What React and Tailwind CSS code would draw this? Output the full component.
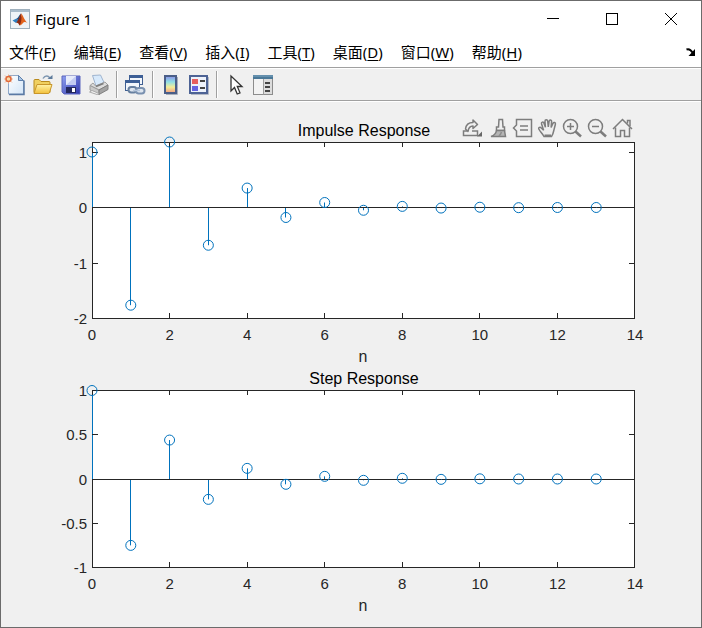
import React from "react";

const MENUS = [
    { label: "文件", hotkey: "F" },
    { label: "编辑", hotkey: "E" },
    { label: "查看", hotkey: "V" },
    { label: "插入", hotkey: "I" },
    { label: "工具", hotkey: "T" },
    { label: "桌面", hotkey: "D" },
    { label: "窗口", hotkey: "W" },
    { label: "帮助", hotkey: "H" },
];

const IMPULSE = [1, -1.76, 1.18, -0.68, 0.35, -0.18, 0.09, -0.05, 0.02, -0.01, 0.005, -0.003, 0, 0];
const STEP = [1, -0.75, 0.44, -0.23, 0.12, -0.06, 0.03, -0.015, 0.008, -0.004, 0.002, 0, 0, 0];

const AXIS = "#262626";
const LINE = "#0072bd";

// Outer edges of the plot box, in viewBox units
const LEFT = 91;
const RIGHT = 634;
const X_MAX = 14;

const MatlabLogo = () => (
    <svg width="20" height="20" viewBox="0 0 20 20" aria-hidden="true">
        <rect x="0.5" y="0.5" width="19" height="19" fill="#eef3f7" stroke="#9fb0bd" />
        <rect x="1" y="1" width="18" height="2" fill="#a9bccb" />
        <path d="M2.5 11.5 6.5 9.5 8.5 11.8 6 14Z" fill="#2f7fc1" />
        <path d="M6.5 9.5C8.5 9 9.2 5.5 11 4.5L8.5 11.8Z" fill="#1c4f86" />
        <path d="M11 4.5C9.6 6.5 9.4 9.8 6 14c2-.6 2.600 1 3.600 2.500C11.500 15 12.200 12.800 13 12.300Z" fill="#8c2a12" />
        <path d="M11 4.500c1.600.3 3 6.500 6.500 9.500-2.200-1.400-3.600-1.200-4.700.2-1 1.200-2 2.300-3.200 2.300C11.300 14 12 9 11 4.500Z" fill="#e2631d" />
    </svg>
);

const NewIcon = () => (
    <svg width="22" height="22" viewBox="0 0 22 22" aria-hidden="true">
        <defs>
            <linearGradient id="paper" x1="0" y1="0" x2="1" y2="1">
                <stop offset="0" stopColor="#ffffff" />
                <stop offset="1" stopColor="#d3e5f7" />
            </linearGradient>
        </defs>
        <path d="M4.500 1.500h10l5 5v13.500h-15Z" fill="url(#paper)" stroke="#8fa8c8" />
        <path d="M20 6.500V20.500H5" fill="none" stroke="#5a79a4" strokeWidth="1.500" />
        <path d="M14.500 1.500v5h5Z" fill="#a9c6e6" stroke="#5d7fab" />
        <path d="M1 1.500 8 8.500M8 1.500 1 8.500M4.500.5v9M0 5h9" stroke="#f3b391" />
        <circle cx="4.500" cy="5" r="2.500" fill="#fbd9a5" stroke="#e06a3a" strokeWidth="1.500" />
    </svg>
);

const OpenIcon = () => (
    <svg width="22" height="22" viewBox="0 0 22 22" aria-hidden="true">
        <defs>
            <linearGradient id="folder" x1="0" y1="0" x2="0" y2="1">
                <stop offset="0" stopColor="#fff3a8" />
                <stop offset="1" stopColor="#f2c03a" />
            </linearGradient>
        </defs>
        <path d="M2 18.500V6.500q0-1 1-1h4l2 2h8q1 0 1 1v10Z" fill="#f0d060" stroke="#b98a1d" />
        <path d="M2 19.500 5 10.500h15L17.500 18.500q-.3 1-1.300 1Z" fill="url(#folder)" stroke="#c9962a" />
        <path d="M11 4.500C13 1 16.500 1 18 4.500" fill="none" stroke="#7f97b1" strokeWidth="1.500" />
        <path d="M15.500 5h5V1Z" fill="#5d7b9c" />
    </svg>
);

const SaveIcon = () => (
    <svg width="22" height="22" viewBox="0 0 22 22" aria-hidden="true">
        <defs>
            <linearGradient id="floppy" x1="0" y1="0" x2="1" y2="1">
                <stop offset="0" stopColor="#8fa0f0" />
                <stop offset="1" stopColor="#2f37ad" />
            </linearGradient>
        </defs>
        <path d="M2 2h18v18H4L2 18Z" fill="url(#floppy)" stroke="#5a64bd" />
        <rect x="6" y="2" width="10" height="9" fill="#e6ebfb" />
        <path d="M16 2 6 11h10Z" fill="#c2cbf2" />
        <rect x="6" y="13" width="10" height="6" fill="#23285e" />
        <rect x="12" y="14" width="3" height="4" fill="#ffffff" />
    </svg>
);

const PrintIcon = () => (
    <svg width="22" height="22" viewBox="0 0 22 22" aria-hidden="true">
        <path d="M4.500 1.500 12.500 1 16 8.500 8 12Z" fill="#d7e9fb" stroke="#9fb4cf" />
        <path d="M2 11.500 5 9l2.500 3L17 8l3 3-9 5Z" fill="#dcdcdc" stroke="#a0a0a0" />
        <path d="M2 11.500 11 16v4.500L2 16Z" fill="#c9c9c9" stroke="#9b9b9b" />
        <path d="M11 16 20 11v4.500l-9 5Z" fill="#a3a3a3" stroke="#808080" />
        <path d="M4 16.500 1.500 18 9 20.500l2-1Z" fill="#f4f4f4" stroke="#aaaaaa" />
        <path d="M8 12.500 15.500 9.500" stroke="#7d7d7d" strokeWidth="1.500" />
    </svg>
);

const LinkIcon = () => (
    <svg width="22" height="22" viewBox="0 0 22 22" aria-hidden="true">
        <rect x="5.500" y="1.500" width="13" height="9" fill="#f2f6fb" stroke="#3f5f92" />
        <rect x="5" y="1" width="14" height="3" fill="#3d5f96" />
        <rect x="1.500" y="6.500" width="14" height="10" fill="#f2f6fb" stroke="#3f5f92" />
        <rect x="1" y="6" width="15" height="3" fill="#3d5f96" />
        <rect x="4.500" y="13" width="8" height="5.500" rx="2.700" fill="#dde5ef" stroke="#667f9f" strokeWidth="2" />
        <rect x="12" y="14" width="8.500" height="5.500" rx="2.700" fill="#dde5ef" stroke="#7a91b0" strokeWidth="2" />
        <path d="M9 16.500h7" stroke="#b4c5db" strokeWidth="1.500" />
    </svg>
);

const ColorbarIcon = () => (
    <svg width="22" height="22" viewBox="0 0 22 22" aria-hidden="true">
        <defs>
            <linearGradient id="colorbar" x1="0" y1="0" x2="0" y2="1">
                <stop offset="0" stopColor="#8c8ee8" />
                <stop offset="0.35" stopColor="#8fe0e6" />
                <stop offset="0.65" stopColor="#f3ee98" />
                <stop offset="1" stopColor="#f09a80" />
            </linearGradient>
        </defs>
        <rect x="5" y="2" width="11" height="17" fill="url(#colorbar)" stroke="#4a5e88" strokeWidth="2" />
        <path d="M17.500 3v17.500H6" fill="none" stroke="#a9afbb" />
    </svg>
);

const LegendIcon = () => (
    <svg width="22" height="22" viewBox="0 0 22 22" aria-hidden="true">
        <rect x="2" y="2" width="17" height="17" fill="#edf2fb" stroke="#4d6395" strokeWidth="2" />
        <path d="M20.500 3v17.500H3" fill="none" stroke="#b3b9c6" />
        <rect x="4" y="5" width="6" height="5" fill="#e65f5f" />
        <rect x="4" y="12" width="6" height="5" fill="#6464e2" />
        <path d="M12 7h5M12 14h5" stroke="#444444" strokeWidth="2" />
    </svg>
);

const PointerIcon = () => (
    <svg width="22" height="22" viewBox="0 0 22 22" aria-hidden="true">
        <path d="M7 2v15l3.500-3.500 2.700 6.500 2.800-1.200-2.700-6.300H18Z" fill="#ffffff" stroke="#333333" strokeWidth="1.300" />
    </svg>
);

const PropertyIcon = () => (
    <svg width="22" height="22" viewBox="0 0 22 22" aria-hidden="true">
        <rect x="1.500" y="1.500" width="19" height="19" fill="#f3f3f3" stroke="#8d8d8d" />
        <rect x="1" y="1" width="20" height="4" fill="#4a7898" />
        <path d="M1 2h20" stroke="#7ea7c2" />
        <rect x="12" y="5" width="8" height="15" fill="#dcdcdc" />
        <path d="M11.500 5v15.500" stroke="#9d9d9d" />
        <path d="M13 9h5M13 13h5M13 17h5" stroke="#444444" strokeWidth="2" />
    </svg>
);

const AxesIcon = ({ children }) => (
    <svg width="25" height="24" viewBox="0 0 25 24" fill="none" stroke="#7d7d7d" strokeWidth="1.500" aria-hidden="true">
        {children}
    </svg>
);

const AXES_TOOLS = [
    {
        name: "Export",
        icon: (
            <AxesIcon>
                <path d="M7 14H3.500v4.500h14V14H12" />
                <path d="M5.500 12C6 7.500 8.500 5.500 13 5.500V3l4.500 4.500L13 11.500V9c-3 0-4.500 1.500-5 5.500Z" strokeLinejoin="round" />
                <path d="M22 14.500v5h-5Z" fill="#666666" stroke="none" />
            </AxesIcon>
        ),
    },
    {
        name: "Brush",
        icon: (
            <AxesIcon>
                <path d="M13.500 10 14 2.500h3.500L18 10h1.500v3.500h-8V10Z" />
                <path d="M11.500 13.500C11 16.500 9 18.500 6 19.500h14.500l-1-6Z" fill="#b5b5b5" />
                <path d="M14 19c1-1 2-2.500 2.500-4" stroke="#8d8d8d" />
            </AxesIcon>
        ),
    },
    {
        name: "Data tips",
        icon: (
            <AxesIcon>
                <path d="M6.500 2.500h15v17h-15v-5.500L3.500 11l3-3Z" />
                <path d="M10 9h8M10 13h8" />
            </AxesIcon>
        ),
    },
    {
        name: "Pan",
        icon: (
            <AxesIcon>
                <path
                    d="M9 19.500C7.500 16.500 5 14.500 3.800 12c-.6-1.600 1.400-2.200 2.500-1l2.300 2.200L6.500 6.800c-.4-1.900 1.900-2.400 2.500-.6l1.400 4L10 4.200c0-2 2.500-2 2.700 0l.6 5.800.8-5.800c.3-1.900 2.700-1.600 2.500.3l-.5 6 1.800-4c.8-1.700 3-1 2.500.8l-1.600 6.200c-.5 2.500-1 4.300-2.300 6Z"
                    fill="#eeeeee"
                />
                <path d="M9.500 18.500h6.500" strokeWidth="2" />
            </AxesIcon>
        ),
    },
    {
        name: "Zoom in",
        icon: (
            <AxesIcon>
                <circle cx="10.500" cy="9.500" r="7" />
                <path d="M10.500 6v7M7 9.500h7" />
                <path d="m15.500 14.500 5.500 5" strokeWidth="2.500" />
            </AxesIcon>
        ),
    },
    {
        name: "Zoom out",
        icon: (
            <AxesIcon>
                <circle cx="10.500" cy="9.500" r="7" />
                <path d="M7 9.500h7" />
                <path d="m15.500 14.500 5.500 5" strokeWidth="2.500" />
            </AxesIcon>
        ),
    },
    {
        name: "Restore view",
        icon: (
            <AxesIcon>
                <path d="M3 12 12.500 2.500 22 12" />
                <path d="M17.500 6.500V3.500H20V9" />
                <path d="M5.500 10.500v9h5v-6h4v6h5v-9" />
            </AxesIcon>
        ),
    },
];

const TOOL_GROUPS = [
    [
        { name: "新建图窗", Icon: NewIcon },
        { name: "打开文件", Icon: OpenIcon },
        { name: "保存图窗", Icon: SaveIcon },
        { name: "打印图窗", Icon: PrintIcon },
    ],
    [{ name: "链接/取消链接绘图", Icon: LinkIcon }],
    [
        { name: "插入颜色栏", Icon: ColorbarIcon },
        { name: "插入图例", Icon: LegendIcon },
    ],
    [
        { name: "编辑绘图", Icon: PointerIcon },
        { name: "打开属性检查器", Icon: PropertyIcon },
    ],
];

// Stem plot; top and bottom are the rows of the box edges, zero is where v = 0 falls
const StemPlot = ({ title, data, height, top, zero, bottom, unit, yTicks }) => {
    const xAt = (n) => LEFT + ((RIGHT - LEFT) * n) / X_MAX;
    const yAt = (v) => zero + 0.5 - v * unit;
    // Snap lines to whole pixels so that they stay crisp
    const column = (n) => Math.min(Math.floor(xAt(n)), RIGHT - 1) + 0.5;
    const row = (v) => Math.round(zero - v * unit) + 0.5;
    const xTicks = [0, 2, 4, 6, 8, 10, 12, 14];

    return (
        <svg
            viewBox={`0 0 700 ${height}`}
            className="block h-auto w-full font-['Liberation_Sans',Arial,sans-serif]"
            role="img"
            aria-label={title}
        >
            <rect
                x={LEFT + 0.5}
                y={top + 0.5}
                width={RIGHT - LEFT - 1}
                height={bottom - top}
                fill="#ffffff"
                stroke={AXIS}
            />
            <path d={`M${LEFT} ${row(0)}H${RIGHT}`} stroke={AXIS} />

            {data.map((v, n) => (
                <path key={n} d={`M${column(n)} ${row(0) + (v < 0 ? 0.5 : -0.5)}V${yAt(v)}`} stroke={LINE} />
            ))}

            {xTicks.map((n) => (
                <g key={n}>
                    <path d={`M${column(n)} ${top}v5M${column(n)} ${bottom + 1}v-6`} stroke={AXIS} />
                    <text x={xAt(n)} y={bottom + 22} fontSize="15" textAnchor="middle" fill={AXIS}>
                        {n}
                    </text>
                </g>
            ))}
            {yTicks.map((v) => (
                <g key={v}>
                    <path d={`M${LEFT} ${row(v)}h6M${RIGHT} ${row(v)}h-6`} stroke={AXIS} />
                    <text x={LEFT - 5} y={row(v) + 5} fontSize="15" textAnchor="end" fill={AXIS}>
                        {v}
                    </text>
                </g>
            ))}

            {data.map((v, n) => (
                <circle key={n} cx={xAt(n)} cy={yAt(v)} r="5" fill="none" stroke={LINE} />
            ))}

            <text x="363" y={top - 6} fontSize="16" textAnchor="middle" fill="#000000">
                {title}
            </text>
            <text x="362" y={bottom + 44} fontSize="16" textAnchor="middle" fill={AXIS}>
                n
            </text>
        </svg>
    );
};

const App = () => {
    return (
        <div className="flex min-h-screen flex-col border border-[#6b6b6b] bg-[#f0f0f0] font-['Noto_Sans','Noto_Sans_CJK_SC',sans-serif] text-black">
            {/* Title bar */}
            <header className="flex h-9 items-center bg-white pr-px pl-[9px]">
                <MatlabLogo />
                <h1 className="ml-[5px] flex-1 text-[15px]">Figure 1</h1>
                <div className="flex">
                    <button aria-label="最小化" className="flex h-9 w-[59px] items-center justify-center">
                        <svg width="12" height="12" stroke="#000000" aria-hidden="true">
                            <path d="M0 5.500h12" />
                        </svg>
                    </button>
                    <button aria-label="最大化" className="flex h-9 w-[59px] items-center justify-center">
                        <svg width="12" height="12" fill="none" stroke="#000000" aria-hidden="true">
                            <rect x="0.5" y="0.5" width="11" height="11" />
                        </svg>
                    </button>
                    <button aria-label="关闭" className="flex h-9 w-[59px] items-center justify-center">
                        <svg width="12" height="12" stroke="#000000" aria-hidden="true">
                            <path d="M0 0 12 12M12 0 0 12" />
                        </svg>
                    </button>
                </div>
            </header>

            {/* Menu bar */}
            <nav className="flex h-[30px] items-center gap-[18px] bg-white pr-[5px] pl-2 text-[15px]">
                {MENUS.map(({ label, hotkey }) => (
                    <button key={hotkey} className="whitespace-nowrap">
                        {label}(<span className="underline underline-offset-2">{hotkey}</span>)
                    </button>
                ))}
                <button aria-label="停靠图窗" className="ml-auto">
                    <svg width="10" height="10" viewBox="0 0 10 10" aria-hidden="true">
                        <path d="M.5 2.500C3 1.500 5 3 6.500 5.500" fill="none" stroke="#000000" strokeWidth="2" />
                        <path d="M9 2v7H2.500Z" fill="#000000" />
                    </svg>
                </button>
            </nav>

            {/* Toolbar */}
            <div className="border-t border-[#a0a0a0]">
                <div className="flex h-[33px] items-center border-t border-b border-t-white border-b-[#a0a0a0]">
                    {TOOL_GROUPS.map((group, i) => (
                        <React.Fragment key={i}>
                            {i > 0 && <div className="mx-[3px] h-[27px] w-0.5 border-r border-l border-r-white border-l-[#a0a0a0]" />}
                            {group.map(({ name, Icon }) => (
                                <button key={name} aria-label={name} className="flex w-7 justify-center">
                                    <Icon />
                                </button>
                            ))}
                        </React.Fragment>
                    ))}
                </div>
            </div>

            {/* Figure canvas */}
            <main className="relative flex-1 border-t border-white">
                <StemPlot
                    title="Impulse Response"
                    data={IMPULSE}
                    height={266}
                    top={40}
                    zero={105}
                    bottom={216}
                    unit={55.5}
                    yTicks={[1, 0, -1, -2]}
                />
                <StemPlot
                    title="Step Response"
                    data={STEP}
                    height={258}
                    top={22}
                    zero={110.5}
                    bottom={199}
                    unit={88.5}
                    yTicks={[1, 0.5, 0, -0.5, -1]}
                />
                <div className="absolute top-[15px] right-[66px] flex">
                    {AXES_TOOLS.map(({ name, icon }) => (
                        <button key={name} aria-label={name}>
                            {icon}
                        </button>
                    ))}
                </div>
            </main>
        </div>
    );
};

export default App;
